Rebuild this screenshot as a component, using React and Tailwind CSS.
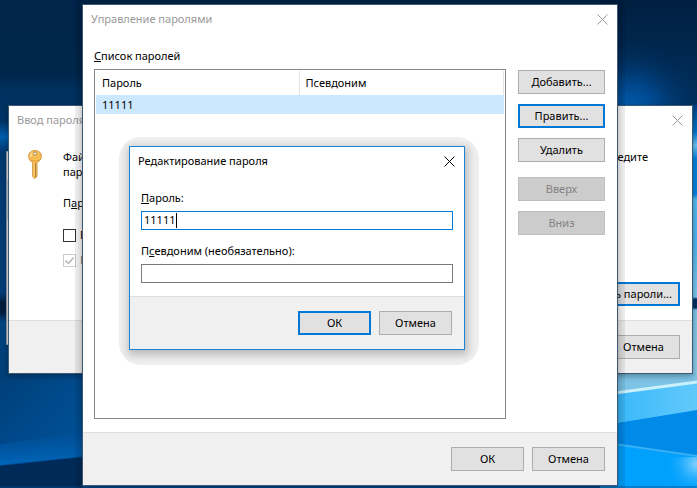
import clsx from "clsx";

function Wallpaper() {
  return (
    <svg
      className="absolute inset-0 h-full w-full"
      viewBox="0 0 697 488"
      preserveAspectRatio="none"
      aria-hidden="true"
    >
      <defs>
        <linearGradient id="left" x1="0" y1="0" x2="0" y2="1">
          <stop offset="0" stopColor="#00244a" />
          <stop offset="0.15" stopColor="#00264b" />
          <stop offset="0.18" stopColor="#002f5c" />
          <stop offset="0.25" stopColor="#003568" />
          <stop offset="0.28" stopColor="#0060b0" />
          <stop offset="0.31" stopColor="#00386f" />
          <stop offset="0.6" stopColor="#003c75" />
          <stop offset="0.62" stopColor="#001c3d" />
          <stop offset="0.64" stopColor="#001c3d" />
          <stop offset="0.66" stopColor="#00437f" />
          <stop offset="0.77" stopColor="#003f78" />
          <stop offset="0.9" stopColor="#004788" />
          <stop offset="1" stopColor="#004b8f" />
        </linearGradient>
        <linearGradient id="lift" x1="0" y1="0" x2="1" y2="0">
          <stop offset="0" stopColor="#0060b0" stopOpacity="0" />
          <stop offset="1" stopColor="#0060b0" stopOpacity="0.4" />
        </linearGradient>
        <linearGradient id="beam" x1="0" y1="0" x2="0" y2="1">
          <stop offset="0" stopColor="#0060b4" stopOpacity="0" />
          <stop offset="1" stopColor="#0065b8" />
        </linearGradient>
        <radialGradient id="glow" cx="630" cy="115" r="75" gradientUnits="userSpaceOnUse">
          <stop offset="0" stopColor="#0062bc" />
          <stop offset="0.45" stopColor="#004384" />
          <stop offset="1" stopColor="#002a55" stopOpacity="0" />
        </radialGradient>
        <linearGradient id="corner" x1="0" y1="0" x2="0" y2="1">
          <stop offset="0" stopColor="#001f40" />
          <stop offset="1" stopColor="#003263" />
        </linearGradient>
        <linearGradient id="edge" x1="0" y1="105" x2="0" y2="375" gradientUnits="userSpaceOnUse">
          <stop offset="0" stopColor="#003f80" />
          <stop offset="0.1" stopColor="#0077d0" />
          <stop offset="0.15" stopColor="#6cc8f4" />
          <stop offset="0.2" stopColor="#0083e0" />
          <stop offset="0.33" stopColor="#0083e0" />
          <stop offset="0.35" stopColor="#58bdf0" />
          <stop offset="0.5" stopColor="#4fb5ee" />
          <stop offset="0.71" stopColor="#7bc8ee" />
          <stop offset="0.72" stopColor="#003064" />
          <stop offset="0.75" stopColor="#003064" />
          <stop offset="0.76" stopColor="#7cc5e8" />
          <stop offset="1" stopColor="#8acbeb" />
        </linearGradient>
        <linearGradient id="band" x1="0" y1="0" x2="1" y2="0">
          <stop offset="0" stopColor="#31b4fb" />
          <stop offset="1" stopColor="#62cafa" />
        </linearGradient>
        <radialGradient id="flare" cx="697" cy="464" r="32" gradientUnits="userSpaceOnUse">
          <stop offset="0" stopColor="#8bd3ff" />
          <stop offset="1" stopColor="#00a2ff" stopOpacity="0" />
        </radialGradient>
      </defs>
      <rect width="697" height="488" fill="url(#left)" />
      <rect y="373" width="90" height="115" fill="url(#lift)" />
      <path d="M0 444L83 432V456L0 465z" fill="url(#beam)" />
      <path d="M0 466L83 457V488H0z" fill="#002b58" />
      <rect x="600" width="97" height="120" fill="url(#corner)" />
      <rect x="555" y="40" width="142" height="80" fill="url(#glow)" />
      <rect x="690" y="105" width="7" height="270" fill="url(#edge)" />
      <path d="M600 373H697V383L600 395z" fill="#7dc4e6" />
      <path d="M600 394L697 382V411L600 426z" fill="url(#band)" />
      <path d="M600 395L697 382" stroke="#c9f0fb" strokeWidth="3" />
      <path d="M600 426L697 410V460L600 444z" fill="#008be8" />
      <path d="M600 443L697 457V488H600z" fill="#00a0fd" />
      <path d="M600 442L697 456" stroke="#36b2f6" strokeWidth="2" />
      <rect x="660" y="457" width="37" height="31" fill="url(#flare)" />
      <path d="M0 486H697V488H0z" fill="#004b8f" opacity="0.4" />
    </svg>
  );
}

function TitleBar({ id, title, inactive }) {
  return (
    <div
      className={clsx(
        "flex h-[29px] items-center justify-between pr-[9px] pl-2",
        inactive && "text-[#999999]"
      )}
    >
      <h2 id={id}>{title}</h2>
      <button type="button" aria-label="Закрыть">
        <svg width="11" height="11" viewBox="0 0 11 11" fill="none" stroke="currentColor">
          <path d="M.5.5l10 10M10.5.5l-10 10" />
        </svg>
      </button>
    </div>
  );
}

function Button({ children, primary, wide, disabled }) {
  return (
    <button
      type="button"
      disabled={disabled}
      className={clsx(
        "h-6 shrink-0 text-center leading-4",
        wide ? "w-[87px]" : "w-[73px]",
        primary ? "border-2 border-[#0078d7]" : "border",
        !primary && (disabled ? "border-[#bfbfbf]" : "border-[#adadad]"),
        disabled ? "bg-[#cccccc] text-[#838383]" : "bg-[#e1e1e1]"
      )}
    >
      {children}
    </button>
  );
}

function Footer({ children }) {
  return (
    <div className="flex h-[53px] justify-end gap-2 border-t border-[#dfdfdf] bg-[#f0f0f0] px-3 pt-3.5">
      {children}
    </div>
  );
}

function KeyIcon() {
  return (
    <svg width="16" height="32" viewBox="0 0 16 32" aria-hidden="true">
      <path
        d="M8 1.5C4.200 1.5 1.600 4 1.600 7.300c0 2.800 1.500 5 4 6v14l2 2.200 2.400-2v-14.200c2.800-1 4.400-3.200 4.400-6C14.400 4 11.800 1.500 8 1.500z"
        fill="#f6bd52"
        stroke="#d09a48"
      />
      <path d="M3.500 8a4.500 4.500 0 0 1 2-4" stroke="#ffe09a" strokeWidth="1.500" fill="none" />
      <path d="M4 11c2 1.500 6 1.500 8 0" stroke="#e39f3a" fill="none" />
      <path d="M8.500 14v14" stroke="#b9803a" />
      <path d="M7 14v13" stroke="#fbcf78" />
      <circle cx="8" cy="4.500" r="1.500" fill="#fff" stroke="#a88a5a" />
    </svg>
  );
}

function EnterPasswordWindow() {
  return (
    <div className="absolute top-[105px] right-1 left-2 border border-[#3c5a75] bg-white shadow-[0_2px_6px_rgba(0,0,0,0.35)]">
      <TitleBar title="Ввод пароля" inactive />
      <div className="flex h-[185px] gap-5 pt-3.5 pr-3 pl-[18px]">
        <KeyIcon />
        <div className="grow">
          <div className="flex justify-between pr-8 leading-[15px]">
            <p>
              Файл
              <br />
              пароль
            </p>
            <p>Введите</p>
          </div>
          <p className="mt-4 leading-4">
            П<u>а</u>роль
          </p>
          <label className="mt-4 flex h-4 items-center gap-1">
            <input
              type="checkbox"
              className="size-[13px] appearance-none border border-[#333333]"
            />
            Показать
          </label>
          <label className="mt-[9px] flex h-4 items-center gap-1 text-[#838383]">
            <span className="relative flex">
              <input
                type="checkbox"
                defaultChecked
                disabled
                className="size-[13px] appearance-none border border-[#cccccc]"
              />
              <svg
                className="absolute inset-0"
                width="13"
                height="13"
                fill="none"
                stroke="#b5b5b5"
                strokeWidth="1.500"
              >
                <path d="M2.500 6.500l3 3 5-6" />
              </svg>
            </span>
            Использовать
          </label>
          <div className="mt-3.5 flex justify-end">
            <button
              type="button"
              className="h-6 border-2 border-[#0078d7] bg-[#e1e1e1] px-1.5 leading-4"
            >
              Упорядочить пароли...
            </button>
          </div>
        </div>
      </div>
      <Footer>
        <Button>Отмена</Button>
      </Footer>
    </div>
  );
}

function EditPasswordDialog() {
  return (
    <div className="absolute top-[137px] right-[218px] left-[119px] rounded-[22px] bg-[#efefef] pt-[9px] pr-3.5 pb-[15px] pl-2.5">
      <div
        role="dialog"
        aria-labelledby="edit-title"
        className="border border-[#1883d7] bg-white shadow-[1px_3px_8px_2px_rgba(0,0,0,0.22)]"
      >
        <TitleBar id="edit-title" title="Редактирование пароля" />
        <div className="flex h-[120px] flex-col px-[11px] pt-3.5">
          <label htmlFor="password" className="leading-4">
            <u>П</u>ароль:
          </label>
          <div className="mt-[5px] flex h-[19px] items-center border border-[#0078d7] px-0.5">
            <input
              id="password"
              defaultValue="11111"
              size="1"
              className="h-4 w-8 outline-none"
            />
            <span className="h-[15px] w-px bg-black" />
          </div>
          <label htmlFor="alias" className="mt-[13px] leading-4">
            П<u>с</u>евдоним (необязательно):
          </label>
          <input
            id="alias"
            className="mt-[5px] h-[19px] border border-[#7a7a7a] px-0.5 outline-none"
          />
        </div>
        <Footer>
          <Button primary>ОК</Button>
          <Button>Отмена</Button>
        </Footer>
      </div>
    </div>
  );
}

function ManagePasswordsWindow() {
  return (
    <div className="absolute top-1 right-[79px] left-[82px] border border-[#3c5a75] bg-white shadow-[0_0_0_7px_rgba(0,0,0,0.07),0_2px_6px_rgba(0,0,0,0.3)]">
      <TitleBar title="Управление паролями" inactive />
      <div className="px-[11px] pt-3.5 pb-[13px]">
        <p className="leading-4">
          <u>С</u>писок паролей
        </p>
        <div className="mt-[5px] flex items-start gap-3">
          <div className="h-[350px] grow border border-[#828790] p-px">
            <table className="w-full table-fixed text-left">
              <thead>
                <tr className="h-[24px]">
                  <th className="w-[203px] border-r border-[#e5e5e5] px-1.5 font-normal">
                    Пароль
                  </th>
                  <th className="border-r border-[#e5e5e5] px-1.5 font-normal">Псевдоним</th>
                </tr>
              </thead>
              <tbody>
                <tr className="h-[19px] bg-[#cce8ff] leading-4">
                  <td className="px-1.5">11111</td>
                  <td />
                </tr>
              </tbody>
            </table>
          </div>
          <div className="flex flex-col gap-2.5 pt-px pr-px">
            <Button wide>Добавить...</Button>
            <Button wide primary>
              Править...
            </Button>
            <Button wide>Удалить</Button>
            <div className="mt-[5px] flex flex-col gap-2.5">
              <Button wide disabled>
                Вверх
              </Button>
              <Button wide disabled>
                Вниз
              </Button>
            </div>
          </div>
        </div>
      </div>
      <Footer>
        <Button>ОК</Button>
        <Button>Отмена</Button>
      </Footer>
    </div>
  );
}

export default function App() {
  return (
    <main className="relative h-screen overflow-hidden bg-[#00284f] font-['Noto_Sans','Open_Sans',sans-serif] text-[11px] text-black">
      <Wallpaper />
      <div className="absolute top-[151px] left-1.5 h-[194px] w-3 border border-[#8a9eb0] bg-[#eae2e0]">
        <div className="mt-7 h-10 bg-[#c0cbd6]" />
      </div>
      <EnterPasswordWindow />
      <ManagePasswordsWindow />
      <EditPasswordDialog />
    </main>
  );
}
